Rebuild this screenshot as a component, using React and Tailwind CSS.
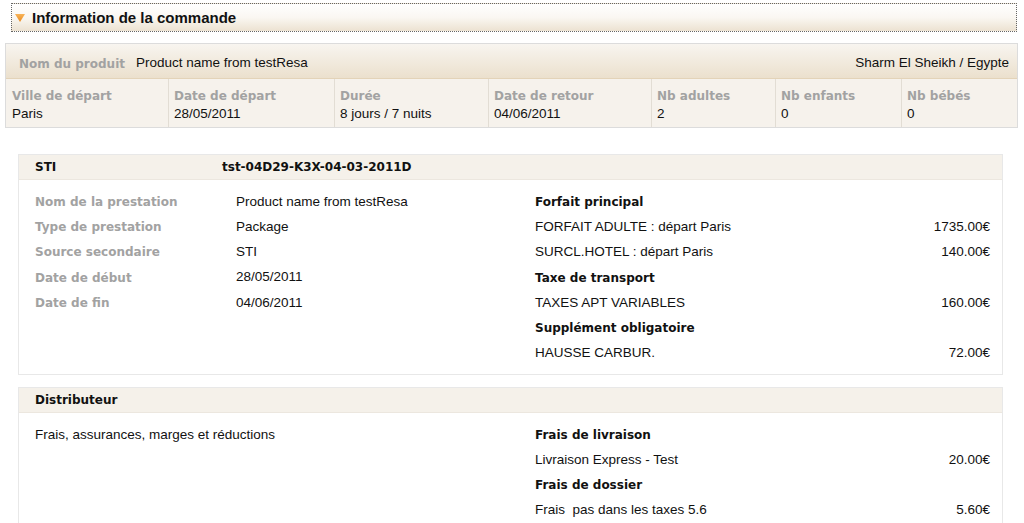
import React from "react";

const lbl = "font-['DejaVu_Sans',sans-serif] font-bold text-[12px] text-[#a2a2a2]";
const val = "font-['Liberation_Sans',Arial,sans-serif] text-[13.5px] text-[#111]";
const hd = "font-['DejaVu_Sans',sans-serif] font-bold text-[12px] text-[#111]";

const cols = [
  ["Ville de départ", "Paris"],
  ["Date de départ", "28/05/2011"],
  ["Durée", "8 jours / 7 nuits"],
  ["Date de retour", "04/06/2011"],
  ["Nb adultes", "2"],
  ["Nb enfants", "0"],
  ["Nb bébés", "0"],
];

function PriceRows({ rows }) {
  return (
    <div className="flex flex-col">
      {rows.map((r, i) =>
        r.h ? (
          <div key={i} className={`h-[25.3px] flex items-center ${hd}`}>{r.h}</div>
        ) : (
          <div key={i} className={`h-[25.3px] flex items-center justify-between ${val}`}>
            <span className="whitespace-pre">{r.l}</span>
            <span>{r.v}</span>
          </div>
        )
      )}
    </div>
  );
}

export default function App() {
  return (
    <div className="w-[1024px] h-[523px] overflow-hidden bg-white">
      <div className="pt-[3px] pl-[11px] pr-[7px]">
        <div className="h-[29px] border border-dotted border-[#666] bg-gradient-to-b from-white via-[#faf7f2] to-[#ece2d1] flex items-center pl-[2px]">
          <svg width="10" height="8" viewBox="0 0 10 8" className="ml-[1px]">
            <defs>
              <linearGradient id="tri" x1="0" y1="0" x2="0" y2="1">
                <stop offset="0" stopColor="#f7b45a" />
                <stop offset="1" stopColor="#ec8a1c" />
              </linearGradient>
            </defs>
            <polygon points="0,0 10,0 5,8" fill="url(#tri)" />
          </svg>
          <span className="ml-[7px] font-['Liberation_Sans',Arial,sans-serif] font-bold text-[15px] text-[#111] leading-none">
            Information de la commande
          </span>
        </div>
      </div>

      <div className="mt-[11px] ml-[5px] mr-[6px] border border-[#dcdcdc]">
        <div className="h-[35px] bg-gradient-to-b from-[#f8f5f0] to-[#ebe0cd] border-b border-[#e3d3b8] flex items-center pt-[5px] pl-[13px] pr-[8px]">
          <span className={lbl}>Nom du produit</span>
          <span className={`${val} ml-[11px]`}>Product name from testResa</span>
          <span className={`${val} ml-auto`}>Sharm El Sheikh / Egypte</span>
        </div>
        <div className="grid grid-cols-[162px_166px_154px_163px_124px_126px_1fr] bg-[#f6f2ec] h-[48px]">
          {cols.map(([l, v], i) => (
            <div
              key={l}
              className={`pt-[9px] ${i === 0 ? "pl-[6px]" : "pl-[5px] border-l border-[#e2ddd4]"}`}
            >
              <div className={`${lbl} leading-[17px]`}>{l}</div>
              <div className={`${val} leading-[17px]`}>{v}</div>
            </div>
          ))}
        </div>
      </div>

      <div className="mt-[26px] ml-[18px] mr-[21px] border border-[#e8e8e8]">
        <div className="h-[25px] bg-[#f5f1ea] border-b border-[#ece7df] flex items-center pl-[16px]">
          <span className={`${hd} w-[187px]`}>STI</span>
          <span className={hd}>tst-04D29-K3X-04-03-2011D</span>
        </div>
        <div className="grid grid-cols-[500px_1fr] pt-[9px] pb-[8px] pl-[16px] pr-[12px]">
          <div className="flex flex-col">
            {[
              ["Nom de la prestation", "Product name from testResa"],
              ["Type de prestation", "Package"],
              ["Source secondaire", "STI"],
              ["Date de début", "28/05/2011"],
              ["Date de fin", "04/06/2011"],
            ].map(([l, v]) => (
              <div key={l} className="h-[25.3px] flex items-center">
                <span className={`${lbl} w-[201px]`}>{l}</span>
                <span className={val}>{v}</span>
              </div>
            ))}
          </div>
          <PriceRows
            rows={[
              { h: "Forfait principal" },
              { l: "FORFAIT ADULTE : départ Paris", v: "1735.00€" },
              { l: "SURCL.HOTEL : départ Paris", v: "140.00€" },
              { h: "Taxe de transport" },
              { l: "TAXES APT VARIABLES", v: "160.00€" },
              { h: "Supplément obligatoire" },
              { l: "HAUSSE CARBUR.", v: "72.00€" },
            ]}
          />
        </div>
      </div>

      <div className="mt-[12px] ml-[18px] mr-[21px] border border-[#e8e8e8]">
        <div className="h-[25px] bg-[#f5f1ea] border-b border-[#ece7df] flex items-center pl-[16px]">
          <span className={hd}>Distributeur</span>
        </div>
        <div className="grid grid-cols-[500px_1fr] pt-[9px] pb-[8px] pl-[16px] pr-[12px]">
          <div>
            <div className={`h-[25.3px] flex items-center ${val}`}>Frais, assurances, marges et réductions</div>
          </div>
          <PriceRows
            rows={[
              { h: "Frais de livraison" },
              { l: "Livraison Express - Test", v: "20.00€" },
              { h: "Frais de dossier" },
              { l: "Frais  pas dans les taxes 5.6", v: "5.60€" },
            ]}
          />
        </div>
      </div>
    </div>
  );
}
